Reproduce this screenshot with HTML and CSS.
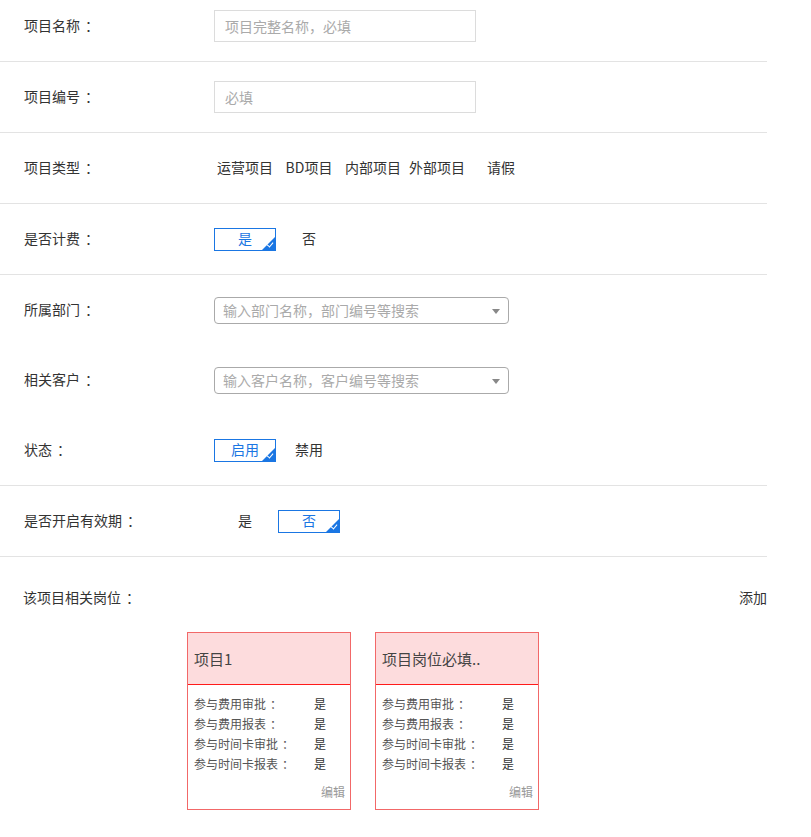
FILE: index.html
```html
<!DOCTYPE html>
<html lang="zh">
<head>
<meta charset="utf-8">
<link rel="stylesheet" href="styles.css">
</head>
<body>
<div class="form">
  <div class="row row-first">
    <div class="label">项目名称<span class="colon">：</span></div>
    <div class="input placeholder">项目完整名称，必填</div>
  </div>
  <div class="row">
    <div class="label">项目编号<span class="colon">：</span></div>
    <div class="input placeholder">必填</div>
  </div>
  <div class="row">
    <div class="label">项目类型<span class="colon">：</span></div>
    <div class="opts">
      <span class="opt">运营项目</span>
      <span class="opt">BD项目</span>
      <span class="opt">内部项目</span>
      <span class="opt">外部项目</span>
      <span class="opt">请假</span>
    </div>
  </div>
  <div class="row">
    <div class="label">是否计费<span class="colon">：</span></div>
    <div class="opts">
      <span class="opt on">是<i class="corner"></i></span>
      <span class="opt">否</span>
    </div>
  </div>
  <div class="row plain">
    <div class="label">所属部门<span class="colon">：</span></div>
    <div class="select"><span class="placeholder">输入部门名称，部门编号等搜索</span><i class="arrow"></i></div>
  </div>
  <div class="row plain">
    <div class="label">相关客户<span class="colon">：</span></div>
    <div class="select"><span class="placeholder">输入客户名称，客户编号等搜索</span><i class="arrow"></i></div>
  </div>
  <div class="row">
    <div class="label">状态<span class="colon">：</span></div>
    <div class="opts">
      <span class="opt on">启用<i class="corner"></i></span>
      <span class="opt">禁用</span>
    </div>
  </div>
  <div class="row">
    <div class="label">是否开启有效期<span class="colon">：</span></div>
    <div class="opts">
      <span class="opt">是</span>
      <span class="opt on">否<i class="corner"></i></span>
    </div>
  </div>
  <div class="section">
    <div class="section-head">
      <span>该项目相关岗位<span class="colon">：</span></span>
      <span>添加</span>
    </div>
    <div class="cards">
      <div class="card">
        <div class="card-head">项目1</div>
        <div class="card-body">
          <div class="kv"><span class="k">参与费用审批<span class="colon">：</span></span><span class="v">是</span></div>
          <div class="kv"><span class="k">参与费用报表<span class="colon">：</span></span><span class="v">是</span></div>
          <div class="kv"><span class="k">参与时间卡审批<span class="colon">：</span></span><span class="v">是</span></div>
          <div class="kv"><span class="k">参与时间卡报表<span class="colon">：</span></span><span class="v">是</span></div>
          <div class="edit">编辑</div>
        </div>
      </div>
      <div class="card">
        <div class="card-head">项目岗位必填..</div>
        <div class="card-body">
          <div class="kv"><span class="k">参与费用审批<span class="colon">：</span></span><span class="v">是</span></div>
          <div class="kv"><span class="k">参与费用报表<span class="colon">：</span></span><span class="v">是</span></div>
          <div class="kv"><span class="k">参与时间卡审批<span class="colon">：</span></span><span class="v">是</span></div>
          <div class="kv"><span class="k">参与时间卡报表<span class="colon">：</span></span><span class="v">是</span></div>
          <div class="edit">编辑</div>
        </div>
      </div>
    </div>
  </div>
</div>
</body>
</html>
```
FILE: styles.css
```css
html, body {
  margin: 0;
  padding: 0;
  background: #fff;
}
body {
  font-family: "Noto Sans CJK SC", "Liberation Sans", sans-serif;
  font-size: 14px;
  color: #333;
}
.colon {
  padding-left: 5px;
}
.kv .colon {
  padding-left: 4px;
}
.form {
  width: 767px;
}
.row {
  display: flex;
  align-items: center;
  height: 70px;
  border-bottom: 1px solid #e3e3e3;
}
.row-first {
  height: 52px;
  padding-bottom: 9px;
}
.row.plain {
  border-bottom: none;
}
.label {
  width: 190px;
  padding-left: 24px;
  flex: none;
  line-height: 20px;
  margin-top: -2px;
}
.input {
  box-sizing: border-box;
  width: 262px;
  height: 32px;
  border: 1px solid #dcdcdc;
  padding-left: 10px;
  display: flex;
  align-items: center;
}
.placeholder {
  color: #aaa;
}
.opts {
  display: flex;
  gap: 2px;
}
.opt {
  position: relative;
  box-sizing: border-box;
  width: 62px;
  height: 23px;
  line-height: 19px;
  text-align: center;
  border: 1px solid transparent;
}
.opt.on {
  border-color: #1a76e3;
  color: #1a76e3;
}
.corner {
  position: absolute;
  right: 0;
  bottom: 0;
  width: 0;
  height: 0;
  border-style: solid;
  border-width: 0 0 13px 13px;
  border-color: transparent transparent #1a76e3 transparent;
}
.corner::after {
  content: "";
  position: absolute;
  right: 2px;
  top: 5px;
  width: 5px;
  height: 3px;
  border-left: 1px solid #fff;
  border-bottom: 1px solid #fff;
  transform: rotate(-50deg);
}
.select {
  position: relative;
  box-sizing: border-box;
  width: 295px;
  height: 27px;
  border: 1px solid #aaa;
  border-radius: 4px;
  padding-left: 8px;
  display: flex;
  align-items: center;
}
.arrow {
  position: absolute;
  right: 8px;
  top: 11px;
  width: 0;
  height: 0;
  border-style: solid;
  border-width: 5px 4px 0 4px;
  border-color: #888 transparent transparent transparent;
}
.section {
  padding-top: 20px;
}
.section-head {
  display: flex;
  justify-content: space-between;
  align-items: center;
  height: 40px;
  padding-left: 23px;
}
.cards {
  display: flex;
  gap: 24px;
  padding-left: 187px;
  margin-top: 15px;
}
.card {
  box-sizing: border-box;
  width: 164px;
  height: 178px;
  border: 1px solid #f26868;
}
.card-head {
  height: 51px;
  background: #fddcdd;
  border-bottom: 1px solid #ff1a1a;
  display: flex;
  align-items: center;
  padding-left: 6px;
  font-size: 15px;
  color: #444;
}
.card-body {
  padding: 9px 5px 0 6px;
  font-size: 12px;
}
.kv {
  display: flex;
  height: 20px;
  line-height: 20px;
}
.k {
  width: 120px;
  color: #555;
}
.v {
  color: #333;
}
.edit {
  margin-top: 8px;
  line-height: 20px;
  text-align: right;
  color: #999;
}
```
